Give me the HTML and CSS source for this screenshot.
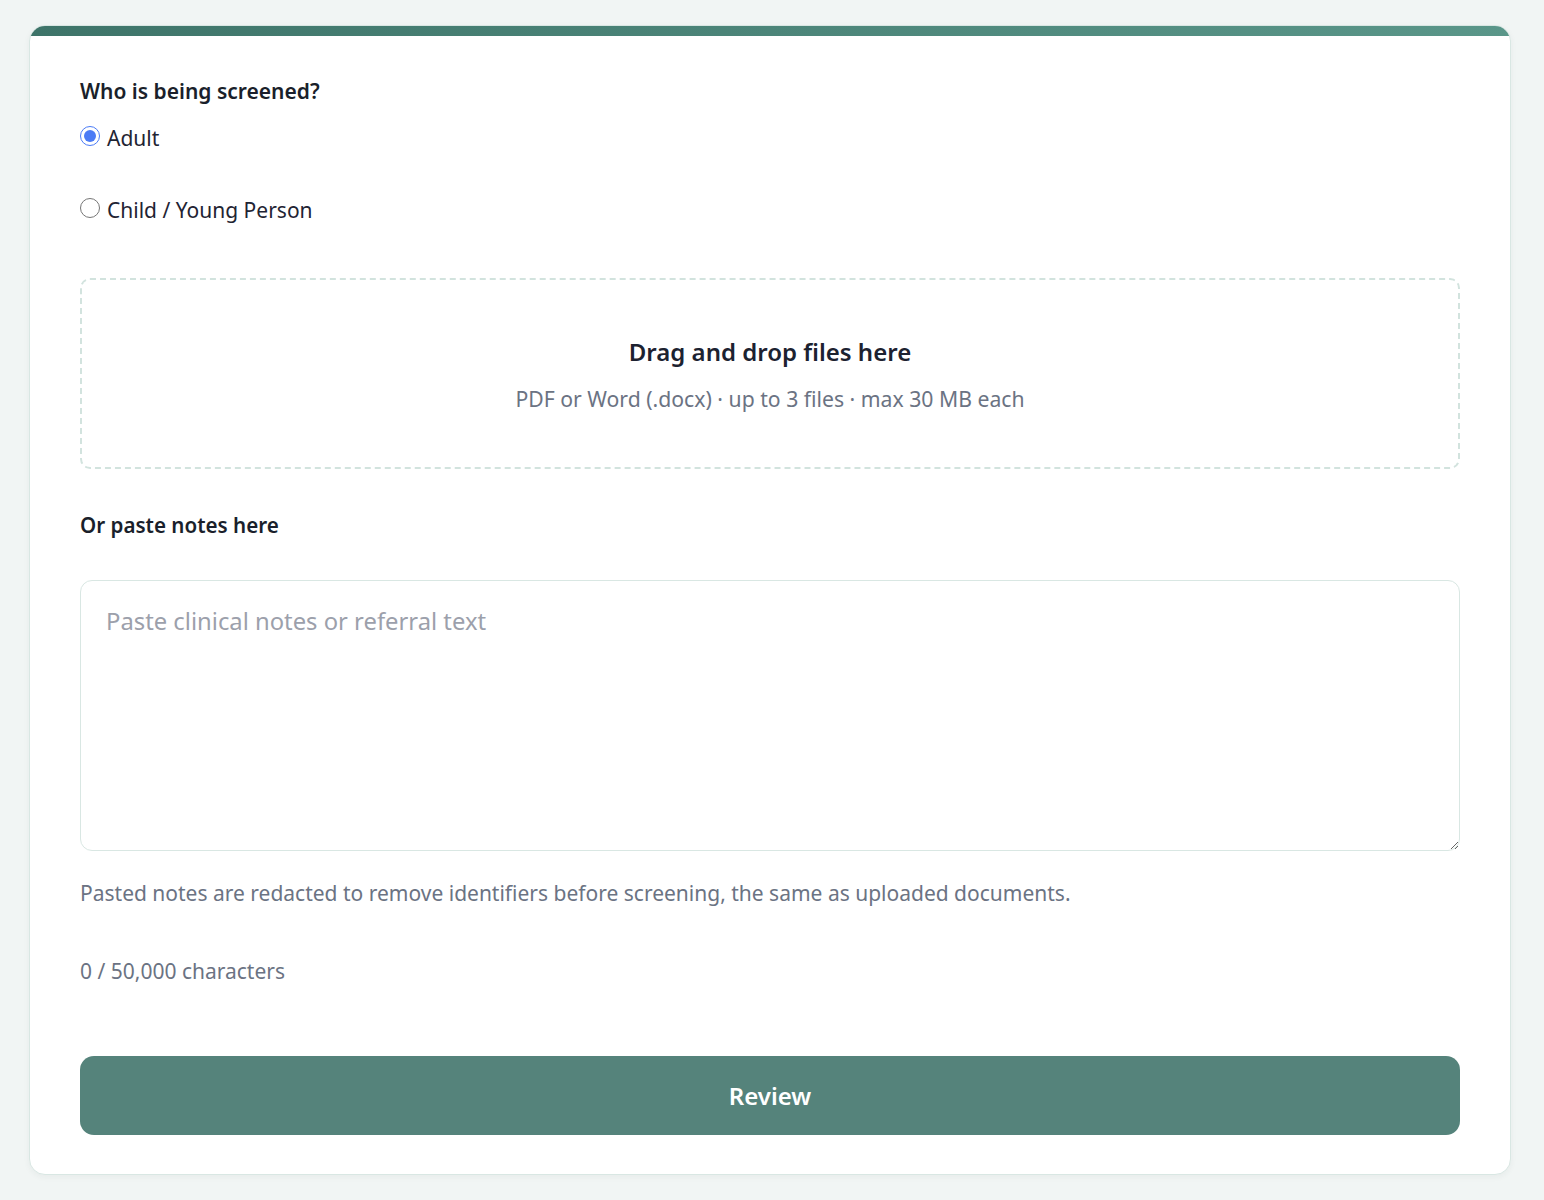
FILE: index.html
```html
<!DOCTYPE html>
<html lang="en">
<head>
<meta charset="UTF-8" />
<meta name="viewport" content="width=device-width, initial-scale=1.0" />
<title>Screening Intake</title>
<link rel="stylesheet" href="styles.css">
</head>
<body>
<div class="card">
  <form class="intake" onsubmit="return false;">
    <div class="field-title">Who is being screened?</div>
    <label class="choice choice-first"><input type="radio" name="subject" value="adult" checked> Adult</label>
    <label class="choice"><input type="radio" name="subject" value="child"> Child / Young Person</label>

    <div class="dropzone">
      <div class="drop-title">Drag and drop files here</div>
      <div class="drop-hint">PDF or Word (.docx) · up to 3 files · max 30 MB each</div>
    </div>

    <label class="field-title paste-title" for="notes">Or paste notes here</label>
    <textarea id="notes" class="notes" placeholder="Paste clinical notes or referral text"></textarea>
    <p class="muted help">Pasted notes are redacted to remove identifiers before screening, the same as uploaded documents.</p>
    <p class="muted counter"><span id="charCount">0</span> / 50,000 characters</p>

    <button class="primary" type="submit">Review</button>
  </form>
</div>
<script>
const notes = document.getElementById('notes');
notes.addEventListener('input', function() {
  document.getElementById('charCount').innerText = notes.value.length.toLocaleString();
});
</script>
</body>
</html>
```

FILE: styles.css
```css
body { font-family: "Noto Sans", "Open Sans", sans-serif; background: #f1f5f4; margin: 0; padding: 25px 33px 25px 29px; color: #1f2937; }
.card { background: white; border: 1px solid #d9e7e3; border-radius: 16px; overflow: hidden; box-shadow: 0 2px 6px rgba(30,60,55,0.05); }
.card::before { content: ""; display: block; height: 10px; background: linear-gradient(90deg, #3e7469, #5a9689); }
.intake { display: flex; flex-direction: column; padding: 40px 50px 39px; }
.field-title { font-size: 21px; line-height: 30px; font-weight: 600; color: #1a1f2b; }
.paste-title { font-size: 20.6px; margin-top: 41px; }
.choice { display: flex; align-items: center; font-size: 21px; line-height: 30px; color: #1f2433; margin-top: 42px; }
.choice-first { margin-top: 17px; }
.choice input { width: 20px; height: 20px; margin: 0 7px 4px 0; accent-color: #4b7bf5; }
.dropzone { margin-top: 53px; border: 2px dashed #d2e3de; border-radius: 10px; padding: 54px 20px 53px; text-align: center; }
.drop-title { font-size: 24px; line-height: 36px; font-weight: 600; color: #1c2230; }
.drop-hint { font-size: 21.2px; line-height: 30px; color: #6b7383; margin-top: 14px; }
.notes { margin-top: 40px; height: 271px; box-sizing: border-box; border: 1px solid #d9e7e3; border-radius: 12px; padding: 22px 25px; font-family: inherit; font-size: 23.8px; line-height: 36px; resize: vertical; outline: none; }
.notes::placeholder { color: #9ca0ab; }
.muted { font-size: 21px; line-height: 30px; color: #6b7383; margin: 0; }
.help { margin-top: 27px; }
.counter { margin-top: 48px; }
button.primary { margin-top: 70px; height: 79px; border: none; border-radius: 14px; background: #55837b; color: white; font-family: inherit; font-size: 24px; font-weight: 600; cursor: pointer; }
```
